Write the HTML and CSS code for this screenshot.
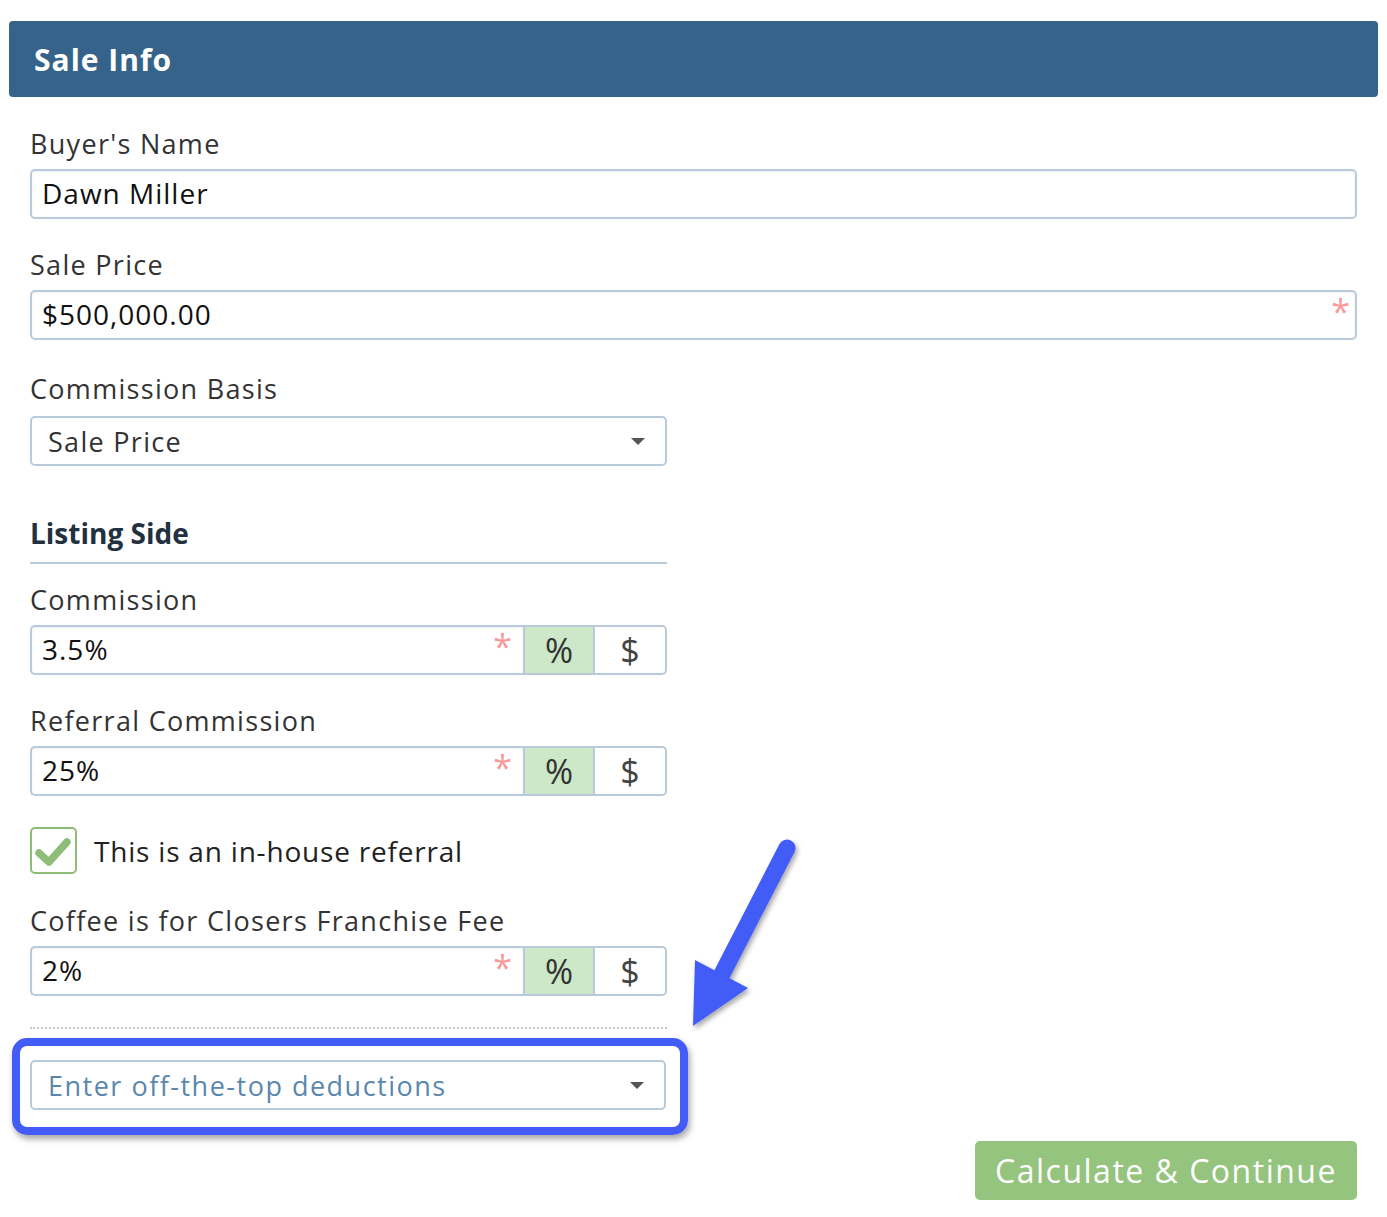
FILE: index.html
```html
<!DOCTYPE html>
<html>
<head>
<meta charset="utf-8">
<link rel="stylesheet" href="styles.css">
</head>
<body>
<div class="page">
  <div class="panel-head"><h1>Sale Info</h1></div>
  <div class="panel-body">
    <div class="field f1">
      <label class="lbl">Buyer's Name</label>
      <div class="input"><span class="val">Dawn Miller</span></div>
    </div>
    <div class="field f2">
      <label class="lbl">Sale Price</label>
      <div class="input"><span class="val">$500,000.00</span><span class="req">*</span></div>
    </div>
    <div class="field f3">
      <label class="lbl lbl-sel">Commission Basis</label>
      <div class="select half"><span class="sel-text">Sale Price</span><span class="caret"></span></div>
    </div>

    <div class="section half">Listing Side</div>

    <div class="field f4">
      <label class="lbl">Commission</label>
      <div class="group half">
        <div class="g-input"><span class="val">3.5%</span><span class="req">*</span></div>
        <div class="addon on">%</div>
        <div class="addon">$</div>
      </div>
    </div>
    <div class="field f5">
      <label class="lbl">Referral Commission</label>
      <div class="group half">
        <div class="g-input"><span class="val">25%</span><span class="req">*</span></div>
        <div class="addon on">%</div>
        <div class="addon">$</div>
      </div>
    </div>

    <div class="check-row">
      <div class="checkbox">
        <svg width="43" height="43" viewBox="0 0 43 43"><path d="M7 24 L17 33 L35 13" fill="none" stroke="#8dbd78" stroke-width="7.5" stroke-linecap="round" stroke-linejoin="round"/></svg>
      </div>
      <span class="check-text">This is an in-house referral</span>
    </div>

    <div class="field f6">
      <label class="lbl">Coffee is for Closers Franchise Fee</label>
      <div class="group half">
        <div class="g-input"><span class="val">2%</span><span class="req">*</span></div>
        <div class="addon on">%</div>
        <div class="addon">$</div>
      </div>
    </div>

    <div class="dotted half"></div>

    <div class="highlight">
      <div class="select"><span class="sel-text placeholder">Enter off-the-top deductions</span><span class="caret"></span></div>
    </div>

    <div class="actions">
      <button class="btn">Calculate &amp; Continue</button>
    </div>
  </div>

  <svg class="arrow" width="130" height="215" viewBox="0 0 130 215">
    <defs>
      <filter id="sh" x="-30%" y="-30%" width="160%" height="160%">
        <feDropShadow dx="2" dy="3" stdDeviation="2.5" flood-color="#000" flood-opacity="0.35"/>
      </filter>
    </defs>
    <g filter="url(#sh)" fill="#435cf8">
      <path d="M103 26 L36 156" stroke="#435cf8" stroke-width="17" stroke-linecap="round"/>
      <polygon points="11,138 64,166 9,204"/>
    </g>
  </svg>
</div>
</body>
</html>
```
FILE: styles.css
```css
* { box-sizing: border-box; }
html, body { margin: 0; padding: 0; background: #fff; }
body { font-family: "Open Sans", "Noto Sans", sans-serif; color: #333; }
.page { position: relative; width: 1387px; height: 1217px; overflow: hidden; padding-top: 21px; }

.panel-head {
  margin: 0 9px;
  height: 76px;
  background: #366389;
  border-radius: 4px;
  display: flex;
  align-items: center;
  padding-left: 25px;
}
.panel-head h1 {
  margin: 0;
  color: #fff;
  font-size: 30px;
  font-weight: 700;
  letter-spacing: 1px;
}

.panel-body { padding: 0 30px; }

.field { display: flex; flex-direction: column; }
.lbl {
  font-size: 27px;
  line-height: 34px;
  height: 34px;
  margin-bottom: 8px;
  color: #333;
  letter-spacing: 1.3px;
}
.lbl-sel { margin-bottom: 10px; }
.f1 { margin-top: 30px; }
.f2 { margin-top: 29px; }
.f3 { margin-top: 32px; }
.f4 { margin-top: 19px; }
.f5 { margin-top: 29px; }
.f6 { margin-top: 30px; }

.half { width: 637px; }

.input, .g-input, .select {
  height: 50px;
  border: 2px solid #b9cbdb;
  border-radius: 5px;
  display: flex;
  align-items: center;
  position: relative;
  background: #fff;
  box-shadow: inset 0 1px 3px rgba(0,0,0,0.06);
}
.input, .g-input { padding-bottom: 3px; }
.input { padding-left: 10px; }
.val { font-size: 28px; color: #111; letter-spacing: 1px; }
.req {
  position: absolute;
  right: 5px;
  top: 2px;
  color: #f79a9a;
  font-size: 34px;
  line-height: 34px;
}
.g-input .req { right: 11px; }

.select { padding-left: 16px; box-shadow: none; }
.sel-text { font-size: 27px; color: #333; letter-spacing: 1.3px; }
.sel-text.placeholder { color: #5a87ad; letter-spacing: 1.5px; }
.caret {
  position: absolute;
  right: 20px;
  top: 20px;
  width: 0; height: 0;
  border-left: 7px solid transparent;
  border-right: 7px solid transparent;
  border-top: 7px solid #555;
}

.section {
  margin-top: 49px;
  font-size: 28px;
  font-weight: 700;
  color: #223140;
  line-height: 36px;
  padding-bottom: 11px;
  border-bottom: 2px solid #b9cbdb;
}

.group { display: flex; height: 50px; }
.g-input {
  flex: 1;
  padding-left: 10px;
  border-radius: 5px 0 0 5px;
  border-right: 0;
}
.addon {
  width: 72px;
  height: 50px;
  border: 2px solid #b9cbdb;
  display: flex;
  align-items: center;
  justify-content: center;
  font-size: 34px;
  color: #444;
  background: #fff;
}
.addon.on { background: #cde8c9; color: #333; }
.addon + .addon { border-left: 0; border-radius: 0 5px 5px 0; }

.check-row { display: flex; align-items: center; margin-top: 31px; height: 47px; }
.checkbox {
  width: 47px; height: 47px;
  border: 2px solid #8dbd78;
  border-radius: 5px;
  display: flex; align-items: center; justify-content: center;
}
.checkbox svg { display: block; }
.check-text { margin-left: 17px; font-size: 28px; color: #222; letter-spacing: 0.8px; }

.dotted { margin-top: 31px; border-top: 2px dotted #c8c8c8; height: 0; }

.highlight {
  margin-top: 9px;
  margin-left: -18px;
  width: 676px;
  border: 8px solid #435cf8;
  border-radius: 15px;
  padding: 14px 14px 17px 10px;
  box-shadow: 2px 4px 6px rgba(0,0,0,0.35);
}

.actions { display: flex; justify-content: flex-end; margin-top: 6px; }
.btn {
  width: 382px;
  height: 59px;
  border: 0;
  border-radius: 5px;
  background: #94c47d;
  color: #fff;
  font-family: inherit;
  font-size: 32px;
  letter-spacing: 1.5px;
  padding: 0;
}

.arrow { position: absolute; left: 684px; top: 822px; }
```
